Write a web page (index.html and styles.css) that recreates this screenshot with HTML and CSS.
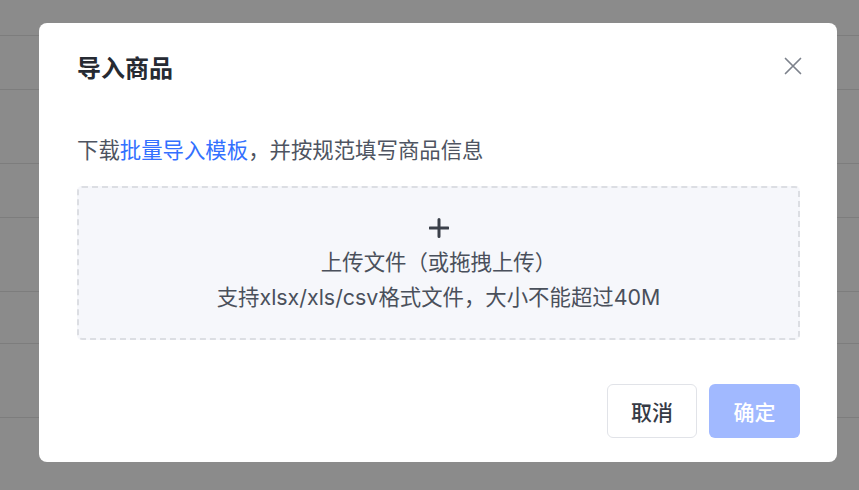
FILE: index.html
```html
<!DOCTYPE html>
<html lang="zh-CN">
<head>
<meta charset="utf-8">
<title>导入商品</title>
<link rel="stylesheet" href="styles.css">
</head>
<body>
<div class="page">
  <div class="row row-head"></div>
  <div class="row row-sm"></div>
  <div class="row row-lg"></div>
  <div class="row row-sm"></div>
  <div class="row row-lg"></div>
  <div class="row row-xs"></div>
  <div class="row row-lg"></div>
</div>
<div class="mask"></div>
<div class="modal">
  <div class="modal-header">
    <h2 class="modal-title">导入商品</h2>
    <button class="close" aria-label="关闭">
      <svg width="18" height="18" viewBox="0 0 18 18"><path d="M1.5 1.5 L16.5 16.5 M16.5 1.5 L1.5 16.5" stroke="#7d828c" stroke-width="1.7" stroke-linecap="round" fill="none"/></svg>
    </button>
  </div>
  <p class="hint">下载<a class="link" href="#">批量导入模板</a>，并按规范填写商品信息</p>
  <div class="upload">
    <svg class="plus" width="20" height="20" viewBox="0 0 20 20"><path d="M10 1.5 V18.5 M1 10 H19" stroke="#3b404a" stroke-width="3" stroke-linecap="round" fill="none"/></svg>
    <div class="upload-line">上传文件（或拖拽上传）</div>
    <div class="upload-line">支持xlsx/xls/csv格式文件，大小不能超过40M</div>
  </div>
  <div class="footer">
    <button class="btn btn-default">取消</button>
    <button class="btn btn-primary">确定</button>
  </div>
</div>
</body>
</html>
```
FILE: styles.css
```css
* { box-sizing: border-box; }
html, body { margin: 0; padding: 0; }
body {
  width: 859px;
  height: 490px;
  overflow: hidden;
  background: #ffffff;
  font-family: Inter, "Noto Sans CJK SC", sans-serif;
}
.page { display: flex; flex-direction: column; }
.row { border-bottom: 1px solid #e6e6e6; }
.row-head { height: 36px; }
.row-sm { height: 54px; }
.row-lg { height: 74px; }
.row-xs { height: 52px; }
.mask {
  position: fixed;
  inset: 0;
  background: rgba(0, 0, 0, 0.455);
}
.modal {
  position: fixed;
  left: 39px;
  top: 23px;
  width: 798px;
  height: 439px;
  background: #ffffff;
  border-radius: 8px;
  padding: 32px 37px 24px 38px;
  display: flex;
  flex-direction: column;
}
.modal-header {
  display: flex;
  align-items: center;
  justify-content: space-between;
  height: 28px;
}
.modal-title {
  margin: 0;
  font-size: 24px;
  font-weight: 600;
  color: #262a32;
  line-height: 28px;
}
.close {
  border: 0;
  background: none;
  padding: 0;
  width: 18px;
  height: 18px;
  margin-right: -2px;
  margin-top: -6px;
  display: flex;
}
.hint {
  margin: 52px 0 0;
  font-size: 21.4px;
  line-height: 30px;
  color: #4e5461;
}
.link { color: #3370ff; text-decoration: none; }
.upload {
  margin-top: 21px;
  height: 154px;
  border: 2px dashed #dcdee3;
  border-radius: 5px;
  background: #f6f7fb;
  display: flex;
  flex-direction: column;
  align-items: center;
  padding-top: 30px;
}
.plus { margin-bottom: 7px; }
.upload-line {
  font-size: 21.4px;
  line-height: 35px;
  color: #4a505b;
}
.footer {
  margin-top: auto;
  display: flex;
  justify-content: flex-end;
  gap: 12px;
}
.btn {
  height: 54px;
  width: 90px;
  border-radius: 6px;
  font-family: inherit;
  font-size: 21px;
  font-weight: 500;
  padding: 0;
}
.btn-default {
  background: #ffffff;
  border: 1px solid #e1e3e8;
  color: #353a45;
}
.btn-primary {
  width: 91px;
  background: #a1b9ff;
  border: 0;
  color: #ffffff;
}
```
